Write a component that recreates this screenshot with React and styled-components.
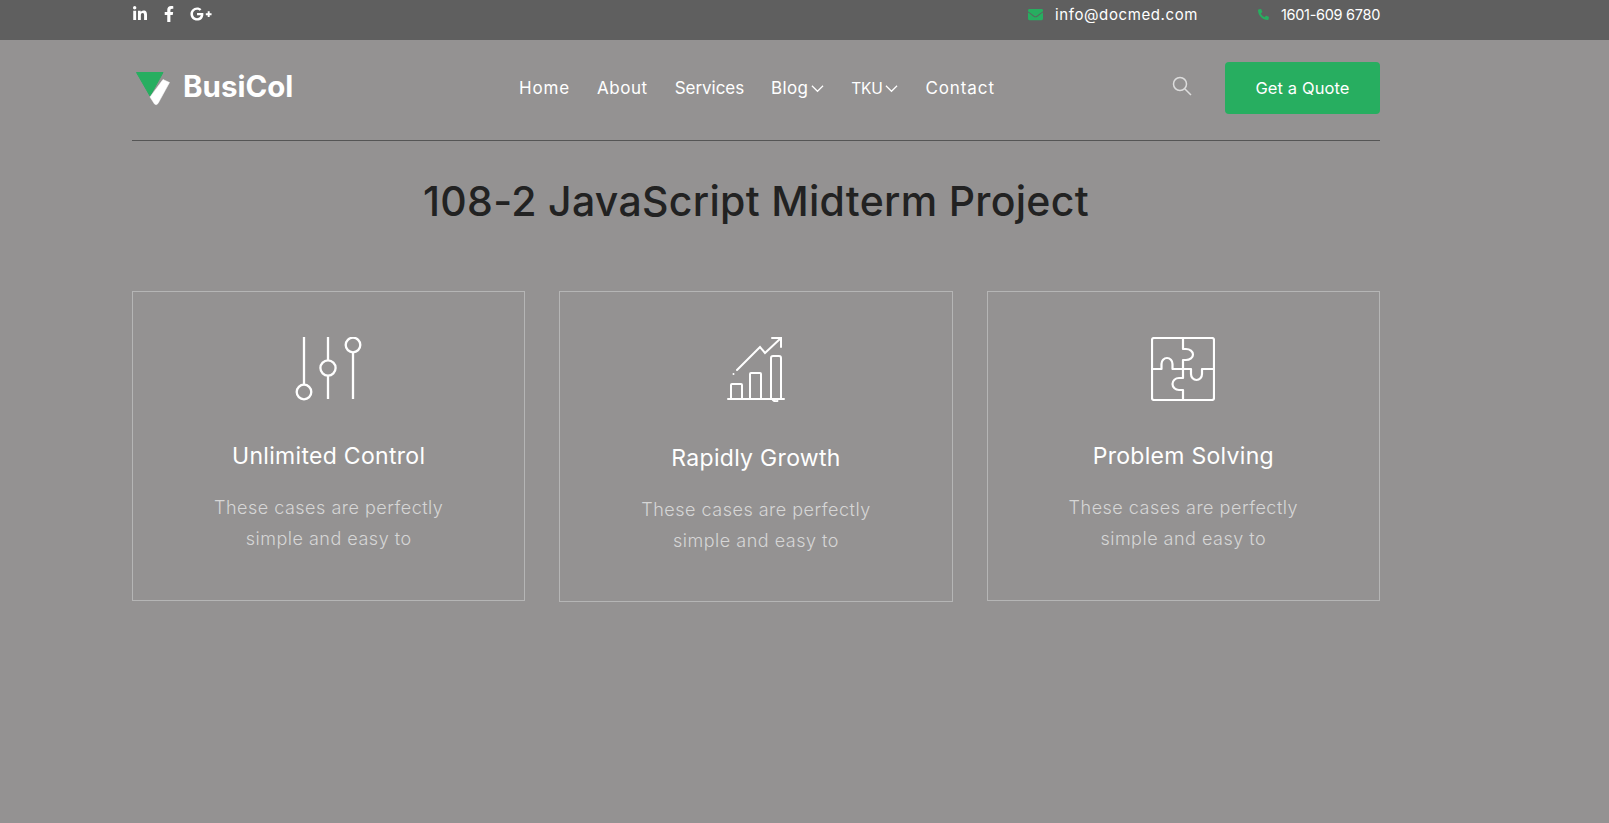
import React from "react";
import styled, { createGlobalStyle } from "styled-components";
import { FaLinkedinIn, FaFacebookF, FaGooglePlusG, FaEnvelope, FaPhone } from "react-icons/fa";

const Global = createGlobalStyle`
  html, body { margin: 0; padding: 0; background: #949292; }
  body { font-family: Inter, "Liberation Sans", sans-serif; }
  * { box-sizing: border-box; }
`;
const Page = styled.div`min-height: 823px; background: #949292; overflow: hidden;`;
const Wrap = styled.div`width: 1248px; margin-left: 132px;`;
const TopBar = styled.div`height: 40px; background: #5f5f5f;`;
const TopInner = styled(Wrap)`display: flex; justify-content: space-between; padding-top: 5px; color: #fff;`;
const Socials = styled.div`display: flex; gap: 13px; align-items: center; height: 18px; font-size: 16px;`;
const Contacts = styled.div`display: flex; gap: 60px; height: 18px; align-items: center;`;
const Contact = styled.div`display: flex; align-items: center; gap: 12px; font-size: ${p => p.$size}px; letter-spacing: ${p => p.$ls}px; color: #fff; svg { color: #27ae60; font-size: ${p => p.$icon}px; }`;
const Header = styled(Wrap)`height: 101px; border-bottom: 1px solid #555; display: flex; align-items: center;`;
const Logo = styled.div`display: flex; align-items: center; gap: 12px; width: 387px; padding: 0 0 8px 3px; font-weight: 700; font-size: 29.5px; color: #fff;`;
const MarkSvg = styled.svg`margin-top: 6px;`;
const Nav = styled.nav`display: flex; gap: 27px; flex: 1; font-size: 17px; color: #fff; padding-bottom: 4px;`;
const NavItem = styled.span`display: inline-flex; align-items: center; gap: 3px; font-size: ${p => p.$size || 17}px; letter-spacing: ${p => p.$ls ?? 0.35}px;`;
const Search = styled.div`display: flex; margin-right: 33px; margin-bottom: 8px;`;
const Quote = styled.button`width: 155px; height: 52px; border: 0; border-radius: 4px; background: #27ae60; color: #fff; font: 400 16.5px Inter, sans-serif; letter-spacing: .1px; margin-bottom: 4px;`;
const Title = styled.h1`margin: 36px 0 0; text-align: center; font-weight: 450; font-size: 41px; line-height: 48px; color: #222; letter-spacing: .3px;`;
const Cards = styled.div`display: grid; grid-template-columns: repeat(3, 1fr); column-gap: 34px; margin-top: 66px; align-items: start;`;
const Card = styled.div`border: 1px solid #b5b5b5; height: ${p => p.$h}px; padding-top: 45px; text-align: center; display: flex; flex-direction: column; align-items: center;`;
const IconBox = styled.div`height: ${p => p.$h}px; svg { display: block; }`;
const CardTitle = styled.h3`margin: 38px 0 0; font-size: 23px; line-height: 30px; font-weight: 400; letter-spacing: .3px; color: #fff;`;
const CardText = styled.p`margin: 22px 0 0; font-size: 18px; line-height: 30.5px; font-weight: 300; letter-spacing: .5px; color: #d6d6d6;`;

const Sliders = () => (
  <svg width="70" height="66" viewBox="0 0 70 66" fill="none" stroke="#fff" strokeWidth="2.3">
    <path d="M10 0v48M34 0v23M34 39v23M59 15.5v46.5" />
    <circle cx="10" cy="55" r="7.3" /><circle cx="34" cy="31" r="7.6" /><circle cx="59" cy="8" r="7.3" />
  </svg>
);
const Growth = () => (
  <svg width="58" height="65" viewBox="0 0 58 65" fill="none" stroke="#fff" strokeWidth="2" strokeLinecap="round">
    <path d="M1 62h56M4 62V48a1 1 0 011-1h9a1 1 0 011 1v14M23 62V37a1 1 0 011-1h9a1 1 0 011 1v25M44 62V21a2 2 0 012-2h6a2 2 0 012 2v41M45.500 62c0 1.500 2 2.500 5 2" />
    <path d="M10 33L33 10l5 6L54 1M45 1h9v9" />
    <path d="M6.500 37h.01" />
  </svg>
);
const Puzzle = () => (
  <svg width="64" height="64" viewBox="0 0 64 64" fill="none" stroke="#fff" strokeWidth="2.200" strokeLinejoin="round">
    <rect x="1" y="1" width="62" height="62" rx="2" />
    <path d="M32 1V12H35A7 5.500 0 0 1 35 23H32V41H28A6.500 6 0 0 0 28 53H32V63" />
    <path d="M1 32H10.500V27A5.500 6 0 0 1 21.500 27V32H40V37A5.500 6 0 0 0 51 37V32H63" />
  </svg>
);
const Mark = () => (
  <MarkSvg width="36" height="36" viewBox="0 0 36 36">
    <path d="M1.500 1.500H28L15 25z" fill="#27ae60" stroke="#27ae60" strokeLinejoin="round" />
    <path d="M28 8.500L34.500 11.500 23 32.500q-1.500 2-3.500 .5L15 26z" fill="#fff" stroke="#fff" strokeWidth=".5" strokeLinejoin="round" />
  </MarkSvg>
);
const Chevron = () => (
  <svg width="13" height="13" viewBox="0 0 14 14" fill="none" stroke="#fff" strokeWidth="1.300"><path d="M1 4l6 6 6-6" /></svg>
);
const Magnifier = () => (
  <svg width="20" height="20" viewBox="0 0 20 20" fill="none" stroke="#ddd" strokeWidth="1.500"><circle cx="8" cy="8" r="6.500" /><path d="M13 13l6 6" /></svg>
);

const cards = [
  { icon: <Sliders />, ih: 66, h: 310, title: "Unlimited Control" },
  { icon: <Growth />, ih: 68, h: 311, title: "Rapidly Growth" },
  { icon: <Puzzle />, ih: 66, h: 310, title: "Problem Solving" },
];

export default function App() {
  return (
    <Page>
      <Global />
      <TopBar>
        <TopInner>
          <Socials><FaLinkedinIn /><FaFacebookF /><FaGooglePlusG size={22} /></Socials>
          <Contacts>
            <Contact $icon={15} $size={15} $ls={0.6}><FaEnvelope />info@docmed.com</Contact>
            <Contact $icon={11} $size={14.5} $ls={-0.3}><FaPhone style={{ transform: "scaleX(-1)" }} />1601-609 6780</Contact>
          </Contacts>
        </TopInner>
      </TopBar>
      <Header>
        <Logo><Mark />BusiCol</Logo>
        <Nav>
          <NavItem $ls={0.85}>Home</NavItem>
          <NavItem $ls={0.55}>About</NavItem>
          <NavItem $ls={-0.05}>Services</NavItem>
          <NavItem>Blog <Chevron /></NavItem>
          <NavItem $size={15.5} $ls={-0.3}>TKU <Chevron /></NavItem>
          <NavItem $ls={0.9}>Contact</NavItem>
        </Nav>
        <Search><Magnifier /></Search>
        <Quote>Get a Quote</Quote>
      </Header>
      <Wrap>
        <Title>108-2 JavaScript Midterm Project</Title>
        <Cards>
          {cards.map(c => (
            <Card key={c.title} $h={c.h}>
              <IconBox $h={c.ih}>{c.icon}</IconBox>
              <CardTitle>{c.title}</CardTitle>
              <CardText>These cases are perfectly<br />simple and easy to</CardText>
            </Card>
          ))}
        </Cards>
      </Wrap>
    </Page>
  );
}
